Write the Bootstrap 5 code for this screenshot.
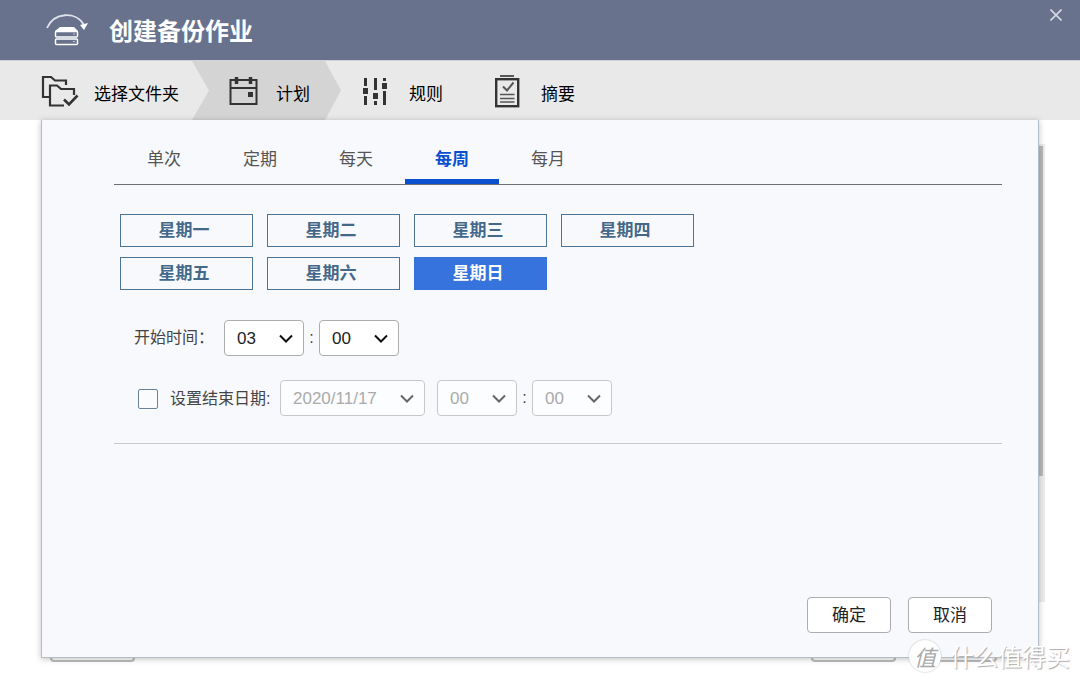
<!DOCTYPE html>
<html lang="zh-CN">
<head>
<meta charset="utf-8">
<meta name="viewport" content="width=device-width, initial-scale=1">
<title>创建备份作业</title>
<link href="https://cdn.jsdelivr.net/npm/bootstrap@5.3.0/dist/css/bootstrap.min.css" rel="stylesheet">
<style>
  body { font-family: "Liberation Sans", "Noto Sans CJK SC", sans-serif; font-size: 16px; line-height: 24px; color: #444; background: #fff; }
  .title-bar { height: 60px; background: #69728d; color: #fff; padding-left: 46px; gap: 21px; }
  .title-bar h1 { font-size: 24px; line-height: 32px; padding-top: 3px; }
  .close-btn { width: 48px; height: 30px; color: #d5d8e2; }
  .step-bar { height: 60px; background: #e9e9e9; border-top: 1px solid #d0d2da; color: #000; font-size: 17px; }
  .step { padding-top: 8px; }
  .step svg { margin-top: -8px; }
  .step-folder { padding-left: 41px; width: 192px; gap: 15px; }
  .step-plan { padding-left: 35px; width: 149px; gap: 15px; background: #d4d4d4; clip-path: polygon(0 0, calc(100% - 16px) 0, 100% 50%, calc(100% - 16px) 100%, 0 100%, 17px 50%); }
  .step-rule { padding-left: 20px; width: 152px; gap: 20px; }
  .step-sum { gap: 20px; }

  .stage { padding: 0 41px 24px; }
  .sheet { z-index: 1; background: #f8f9fd; border: 1px solid #b5bdc7; border-top: 0; box-shadow: 0 1px 6px rgba(0,0,0,.25); padding: 16px 36px 24px 72px; }
  .under-scroll { top: 24px; bottom: 80px; right: 35px; width: 12px; background: #ececec; }
  .under-thumb { height: 330px; width: 10px; background: #b8b9bb; margin-top: 2px; }
  .under-btn { bottom: 20px; width: 85px; height: 36px; border: 2px solid #bcbcbc; border-radius: 4px; background: #fff; }
  .under-back { left: 50px; }
  .under-next { right: 184px; }
  .under-cancel { right: 83px; }

  .plan-tabs { border-bottom: 1px solid #6e6e6e; padding-left: 3px; gap: 2px; }
  .plan-tabs .nav-link { width: 94px; height: 48px; padding: 5px 0 0; border: 0; border-bottom: 5px solid transparent; border-radius: 0; background: none; color: #555; font-size: 17px; }
  .plan-tabs .nav-link.active { color: #0950cf; border-color: #0950cf; font-weight: 700; }

  .day-grid { display: grid; grid-template-columns: repeat(4, 133px); gap: 10px 14px; padding: 29px 0 0 6px; }
  .day-btn { height: 33px; padding: 0 5px 0 0; border: 1px solid #4d7494; border-radius: 0; color: #44688a; font-size: 17px; font-weight: 700; line-height: 24px; }
  .day-btn.active { background: #3773dc; border-color: #3773dc; color: #fff; }

  .time-row { height: 36px; }
  .start-row { margin-top: 30px; padding-left: 20px; }
  .start-row label { width: 90px; }
  .end-row { margin-top: 24px; padding-left: 24px; }
  .end-row label { width: 110px; padding-top: 2px; }
  .end-check { width: 20px; height: 20px; margin: 2px 12px 0 0; border: 1px solid #6a819b; background-color: #fafbfd; }
  .end-check[type=checkbox] { border-radius: 2px; }
  .pick { width: 80px; height: 36px; padding: 1px 30px 0 12px; border: 1px solid #adadad; border-radius: 4px; color: #222; background-color: #fff; font-size: 17px; line-height: 24px; background-size: 14px 9px; background-position: right 10px center;
    background-image: url("data:image/svg+xml,%3Csvg xmlns='http://www.w3.org/2000/svg' viewBox='0 0 14 9'%3E%3Cpath d='M1 1.5l6 6 6-6' fill='none' stroke='%23111' stroke-width='2'/%3E%3C/svg%3E"); }
  .pick:disabled { color: #aaa; opacity: 1; border-color: #c8c8c8; background-color: #fcfdff;
    background-image: url("data:image/svg+xml,%3Csvg xmlns='http://www.w3.org/2000/svg' viewBox='0 0 14 9'%3E%3Cpath d='M1 1.5l6 6 6-6' fill='none' stroke='%23666' stroke-width='2'/%3E%3C/svg%3E"); }
  .pick-date { width: 145px; margin-right: 12px; }
  .colon { width: 15px; }
  .rule-line { margin: 27px 0 0; border-top: 1px solid #c9cacf; opacity: 1; }

  .sheet-foot { gap: 17px; padding-right: 10px; }
  .foot-btn { width: 84px; height: 36px; padding: 2px 0 0; border: 1px solid #adadad; border-radius: 4px; background: #fff; color: #222; font-size: 17px; }

  .stamp { z-index: 2; right: 10px; bottom: 9px; gap: 9px; color: #fff; font: 24px/34px "Noto Sans CJK SC", sans-serif; text-shadow: 1px 1px 1px #aaa; }
  .stamp-disc { width: 32px; height: 32px; background: #fff; color: #aaa; font-size: 22px; box-shadow: 0 0 2px #bbb; text-shadow: none; font-style: italic; }
</style>
</head>
<body class="min-vh-100 d-flex flex-column">

<header class="title-bar d-flex align-items-center position-relative">
  <svg width="42" height="32" viewBox="0 0 42 32" fill="none" stroke="#fff" aria-hidden="true">
    <path d="M1 14C8-2 30-3 38 11" stroke="#dfe2ea" stroke-width="1.8"/>
    <path d="M34 11l8-2-4 7z" fill="#fff" stroke="none"/>
    <path d="M14 13h14l4 4v1H9v-1z" fill="#fff" stroke="none"/>
    <rect x="9.500" y="17.500" width="22" height="5.500" rx="1" stroke-width="1.500"/>
    <rect x="9.500" y="25" width="22" height="5.500" rx="1" stroke-width="1.500"/>
    <path d="M27 20h2M27 27.500h2" stroke="#c8cddb"/>
  </svg>
  <h1 class="m-0 fw-bold">创建备份作业</h1>
  <button type="button" class="close-btn btn p-0 border-0 position-absolute top-0 end-0" aria-label="关闭">
    <svg width="12" height="12" viewBox="0 0 12 12" stroke="currentColor" stroke-width="1.600" class="d-block mx-auto"><path d="M.5.5l11 11M11.500.5l-11 11"/></svg>
  </button>
</header>

<nav class="step-bar d-flex" aria-label="步骤">
  <div class="step step-folder d-flex align-items-center">
    <svg width="38" height="32" viewBox="0 0 38 32" fill="none" stroke="#333" stroke-width="2.200" aria-hidden="true">
      <path d="M8 22H2V2h8l4 3.500h11V10"/>
      <path d="M23 30.500H9V10.500h7l4 3.500h13v6"/>
      <path d="M23 24.500l5 5 8.500-9" stroke-width="2.600"/>
    </svg>
    <span>选择文件夹</span>
  </div>
  <div class="step step-plan d-flex align-items-center" aria-current="step">
    <svg class="flex-shrink-0" width="34" height="32" viewBox="-2 0 34 32" fill="none" stroke="#333" stroke-width="2" aria-hidden="true">
      <rect x="1.500" y="5" width="26" height="24"/>
      <path d="M1 13h27"/><path d="M7.500 2v7M21.500 2v7" stroke-width="3.500"/>
      <path d="M19 17h5v5h-5z" fill="#333" stroke="none"/>
    </svg>
    <span>计划</span>
  </div>
  <div class="step step-rule d-flex align-items-center">
    <svg width="28" height="32" viewBox="0 0 28 32" aria-hidden="true" fill="#333">
      <path d="M3 3h3v8H3zM2 13h5v6H2zM3 21h3v9H3zM13 3h3v12h-3zM12 18h5v6h-5zM13 26h3v4h-3zM22 3h3v3h-3zM21 8h5v6h-5zM22 16h3v14h-3z"/>
    </svg>
    <span>规则</span>
  </div>
  <div class="step step-sum d-flex align-items-center">
    <svg width="28" height="34" viewBox="0 0 28 34" fill="none" stroke="#333" aria-hidden="true">
      <path d="M7 2h14" stroke-width="1.600"/>
      <rect x="3.200" y="5.200" width="22" height="27" stroke-width="2.400"/>
      <path d="M10 12.500l4 4 6.500-8" stroke="#555" stroke-width="2"/>
      <path d="M7 20.500h14.500M7 24.500h14.500M7 28h14.500" stroke="#555" stroke-width="1.400"/>
    </svg>
    <span>摘要</span>
  </div>
</nav>

<main class="stage position-relative flex-grow-1 d-flex">
  <div class="under-scroll position-absolute"><div class="under-thumb"></div></div>
  <div class="under-btn under-back position-absolute"></div>
  <div class="under-btn under-next position-absolute"></div>
  <div class="under-btn under-cancel position-absolute"></div>

  <form class="sheet position-relative flex-grow-1 d-flex flex-column">
    <div class="plan-tabs nav" role="tablist">
      <button type="button" class="nav-link" role="tab">单次</button>
      <button type="button" class="nav-link" role="tab">定期</button>
      <button type="button" class="nav-link" role="tab">每天</button>
      <button type="button" class="nav-link active" role="tab" aria-selected="true">每周</button>
      <button type="button" class="nav-link" role="tab">每月</button>
    </div>

    <div class="day-grid">
      <button type="button" class="btn day-btn">星期一</button>
      <button type="button" class="btn day-btn">星期二</button>
      <button type="button" class="btn day-btn">星期三</button>
      <button type="button" class="btn day-btn">星期四</button>
      <button type="button" class="btn day-btn">星期五</button>
      <button type="button" class="btn day-btn">星期六</button>
      <button type="button" class="btn day-btn active" aria-pressed="true">星期日</button>
    </div>

    <div class="time-row start-row d-flex align-items-center">
      <label for="start-hour">开始时间：</label>
      <select id="start-hour" class="form-select pick"><option>03</option></select>
      <span class="colon text-center">:</span>
      <select class="form-select pick" aria-label="开始分钟"><option>00</option></select>
    </div>

    <div class="time-row end-row d-flex align-items-center">
      <input id="end-on" type="checkbox" class="form-check-input end-check">
      <label for="end-on">设置结束日期:</label>
      <select class="form-select pick pick-date" aria-label="结束日期" disabled><option>2020/11/17</option></select>
      <select class="form-select pick" aria-label="结束小时" disabled><option>00</option></select>
      <span class="colon text-center">:</span>
      <select class="form-select pick" aria-label="结束分钟" disabled><option>00</option></select>
    </div>

    <hr class="rule-line">

    <div class="sheet-foot d-flex justify-content-end mt-auto">
      <button type="submit" class="btn foot-btn">确定</button>
      <button type="button" class="btn foot-btn">取消</button>
    </div>
  </form>

  <div class="stamp position-absolute d-flex align-items-center">
    <span class="stamp-disc rounded-circle d-flex align-items-center justify-content-center">值</span>
    <span>什么值得买</span>
  </div>
</main>

<script src="https://cdn.jsdelivr.net/npm/bootstrap@5.3.0/dist/js/bootstrap.bundle.min.js"></script>
</body>
</html>
